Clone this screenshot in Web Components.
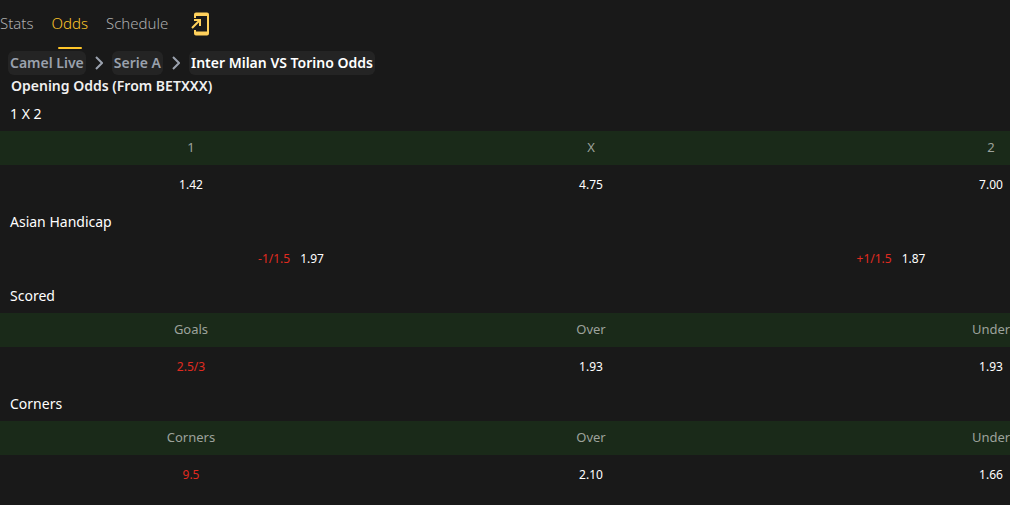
<!DOCTYPE html>
<html lang="en">
<head>
<meta charset="utf-8">
<meta name="viewport" content="width=device-width, initial-scale=1">
<title>Inter Milan VS Torino Odds</title>
<style>
  body {
    margin: 0;
    background: #191919;
    color: #fff;
    font-family: "Noto Sans", "Open Sans", sans-serif;
    overflow: hidden;
  }
</style>
</head>
<body>

<match-tabs>
  <tab-link href="#stats">Stats</tab-link>
  <tab-link href="#odds" active>Odds</tab-link>
  <tab-link href="#schedule">Schedule</tab-link>
</match-tabs>

<main>
  <bread-crumbs>
    <crumb-item href="#home">Camel Live</crumb-item>
    <crumb-item href="#league">Serie A</crumb-item>
    <crumb-item current>Inter Milan VS Torino Odds</crumb-item>
  </bread-crumbs>

  <odds-board>
    <span slot="title">Opening Odds (From BETXXX)</span>
    <odds-market name="1 X 2" heads="1|X|2" odds="1.42|4.75|7.00"></odds-market>
    <odds-market name="Asian Handicap" odds="*-1/1.5 1.97|*+1/1.5 1.87"></odds-market>
    <odds-market name="Scored" heads="Goals|Over|Under" odds="*2.5/3|1.93|1.93"></odds-market>
    <odds-market name="Corners" heads="Corners|Over|Under" odds="*9.5|2.10|1.66"></odds-market>
  </odds-board>
</main>

<script>
function makeTemplate(html) {
  const template = document.createElement('template')
  template.innerHTML = html
  return template
}

const tabsTemplate = makeTemplate(`
<style>
  :host { display: block; }
  nav {
    display: flex;
    align-items: center;
    gap: 18px;
    height: 49px;
  }
  button {
    display: flex;
    margin: 0 0 2px 5px;
    padding: 0;
    border: 0;
    background: none;
    cursor: pointer;
  }
  svg { display: block; }
</style>
<nav aria-label="Match">
  <slot></slot>
  <button type="button" aria-label="Open in app">
    <svg width="19" height="24" viewBox="0 0 19 24" fill="none" stroke="#ffd15c">
      <path d="M4 6V2.5Q4 1.5 5 1.5H16Q17 1.5 17 2.5V21.5Q17 22.5 16 22.5H5Q4 22.5 4 21.5V18" stroke-width="2"/>
      <path d="M4 2.5H17M4 21H17" stroke-width="3"/>
      <path d="M1 16L8.5 8.5M3 8H9V14" stroke-width="2"/>
    </svg>
  </button>
</nav>
`)

class MatchTabs extends HTMLElement {
  constructor() {
    super()
    this.attachShadow({ mode: 'open' })
    this.shadowRoot.appendChild(tabsTemplate.content.cloneNode(true))
  }
}

const tabTemplate = makeTemplate(`
<style>
  :host { display: block; }
  a {
    display: flex;
    flex-direction: column;
    align-items: center;
    justify-content: space-between;
    height: 49px;
    color: #adadad;
    font-size: 15px;
    font-weight: 300;
    line-height: 47px;
    text-decoration: none;
  }
  a::after {
    content: '';
    width: 24px;
    height: 2px;
    border-radius: 1px;
  }
  :host([active]) a { color: #ffc629; }
  :host([active]) a::after { background: #ffc629; }
</style>
<a><slot></slot></a>
`)

class TabLink extends HTMLElement {
  constructor() {
    super()
    this.attachShadow({ mode: 'open' })
    this.shadowRoot.appendChild(tabTemplate.content.cloneNode(true))
    this.shadowRoot.querySelector('a').href = this.getAttribute('href')
  }
}

const crumbsTemplate = makeTemplate(`
<style>
  :host { display: block; }
  nav {
    display: flex;
    align-items: center;
    padding: 2px 8px;
  }
</style>
<nav aria-label="Breadcrumb"><slot></slot></nav>
`)

class BreadCrumbs extends HTMLElement {
  constructor() {
    super()
    this.attachShadow({ mode: 'open' })
    this.shadowRoot.appendChild(crumbsTemplate.content.cloneNode(true))
  }
}

const crumbTemplate = makeTemplate(`
<style>
  :host {
    display: flex;
    align-items: center;
  }
  a {
    padding: 0 2px;
    border-radius: 6px;
    background: #242424;
    color: #9aa1ad;
    font-size: 14px;
    font-weight: 600;
    line-height: 24px;
    text-decoration: none;
    white-space: nowrap;
  }
  svg { margin: 0 9px; }
  :host([current]) a { color: #fff; }
  :host([current]) svg { display: none; }
</style>
<a><slot></slot></a>
<svg width="8" height="14" viewBox="0 0 8 14" fill="none" stroke="#9aa1ad" stroke-width="2" aria-hidden="true">
  <path d="M1 1L7 7L1 13"/>
</svg>
`)

class CrumbItem extends HTMLElement {
  constructor() {
    super()
    this.attachShadow({ mode: 'open' })
    this.shadowRoot.appendChild(crumbTemplate.content.cloneNode(true))

    const link = this.shadowRoot.querySelector('a')
    if (this.hasAttribute('current')) {
      link.setAttribute('aria-current', 'page')
    }
    link.href = this.getAttribute('href') || '#match'
  }
}

// the board is wider than the page and runs off both sides
const boardTemplate = makeTemplate(`
<style>
  :host { display: block; }
  h1 {
    margin: 0;
    padding: 0 11px 2px;
    color: #f0f0f0;
    font-size: 14px;
    font-weight: 600;
    line-height: 18px;
  }
  .markets {
    width: calc(100% + 190px);
    margin-left: -9px;
  }
</style>
<h1><slot name="title"></slot></h1>
<div class="markets"><slot></slot></div>
`)

class OddsBoard extends HTMLElement {
  constructor() {
    super()
    this.attachShadow({ mode: 'open' })
    this.shadowRoot.appendChild(boardTemplate.content.cloneNode(true))
  }
}

const marketTemplate = makeTemplate(`
<style>
  :host { display: block; }
  table {
    width: 100%;
    table-layout: fixed;
    border-collapse: collapse;
  }
  caption {
    padding: 0 19px;
    font-size: 14px;
    line-height: 34px;
    text-align: left;
  }
  th, td {
    padding: 0;
    text-align: center;
  }
  th {
    height: 34px;
    padding-bottom: 2px;
    box-sizing: border-box;
    background: #1a2a19;
    color: #9da29c;
    font-size: 13px;
    font-weight: 400;
    line-height: 32px;
  }
  td {
    height: 40px;
    font-size: 12px;
    line-height: 40px;
  }
  td span + span { margin-left: 10px; }
  .line { color: #e02b20; }
</style>
<table>
  <caption></caption>
  <thead></thead>
  <tbody></tbody>
</table>
`)

class OddsMarket extends HTMLElement {
  constructor() {
    super()
    this.attachShadow({ mode: 'open' })
    this.shadowRoot.appendChild(marketTemplate.content.cloneNode(true))
    this.shadowRoot.querySelector('caption').textContent = this.getAttribute('name')

    if (this.hasAttribute('heads')) {
      const row = this.shadowRoot.querySelector('thead').insertRow()
      this.getAttribute('heads').split('|').forEach(text => {
        const th = document.createElement('th')
        th.scope = 'col'
        th.textContent = text
        row.appendChild(th)
      })
    }

    // a leading * marks the handicap or total line
    const row = this.shadowRoot.querySelector('tbody').insertRow()
    this.getAttribute('odds').split('|').forEach(cell => {
      const td = row.insertCell()
      cell.split(' ').forEach(text => {
        const span = document.createElement('span')
        if (text.startsWith('*')) span.className = 'line'
        span.textContent = text.replace('*', '')
        td.appendChild(span)
      })
    })
  }
}

window.customElements.define('match-tabs', MatchTabs)
window.customElements.define('tab-link', TabLink)
window.customElements.define('bread-crumbs', BreadCrumbs)
window.customElements.define('crumb-item', CrumbItem)
window.customElements.define('odds-board', OddsBoard)
window.customElements.define('odds-market', OddsMarket)
</script>
</body>
</html>
